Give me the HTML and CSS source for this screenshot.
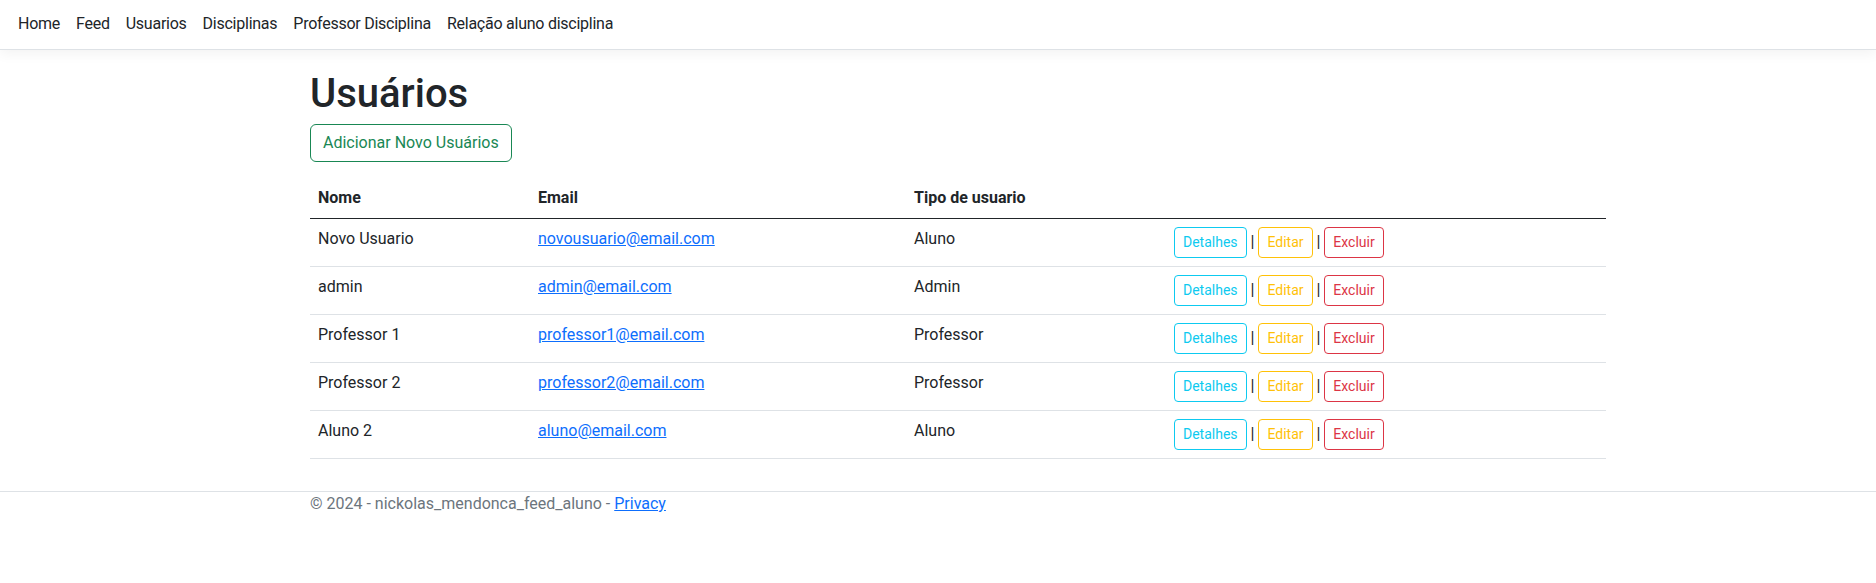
FILE: index.html
```html
<!DOCTYPE html>
<html lang="pt-BR">
<head>
<meta charset="utf-8">
<title>Usuários - nickolas_mendonca_feed_aluno</title>
<link rel="stylesheet" href="styles.css">
</head>
<body>
<header class="topbar">
  <nav class="nav">
    <a class="nav-link" href="#">Home</a>
    <a class="nav-link" href="#">Feed</a>
    <a class="nav-link" href="#">Usuarios</a>
    <a class="nav-link" href="#">Disciplinas</a>
    <a class="nav-link" href="#">Professor Disciplina</a>
    <a class="nav-link" href="#">Relação aluno disciplina</a>
  </nav>
</header>

<main class="page">
  <h1 class="title">Usuários</h1>
  <p class="create"><a class="btn btn-outline-success" href="#">Adicionar Novo Usuários</a></p>

  <table class="users">
    <colgroup>
      <col class="col-name">
      <col class="col-email">
      <col class="col-type">
      <col class="col-actions">
    </colgroup>
    <thead>
      <tr>
        <th>Nome</th>
        <th>Email</th>
        <th>Tipo de usuario</th>
        <th></th>
      </tr>
    </thead>
    <tbody>
      <tr>
        <td>Novo Usuario</td>
        <td><a class="link" href="#">novousuario@email.com</a></td>
        <td>Aluno</td>
        <td><a class="btn-sm info" href="#">Detalhes</a> | <a class="btn-sm warning" href="#">Editar</a> | <a class="btn-sm danger" href="#">Excluir</a></td>
      </tr>
      <tr>
        <td>admin</td>
        <td><a class="link" href="#">admin@email.com</a></td>
        <td>Admin</td>
        <td><a class="btn-sm info" href="#">Detalhes</a> | <a class="btn-sm warning" href="#">Editar</a> | <a class="btn-sm danger" href="#">Excluir</a></td>
      </tr>
      <tr>
        <td>Professor 1</td>
        <td><a class="link" href="#">professor1@email.com</a></td>
        <td>Professor</td>
        <td><a class="btn-sm info" href="#">Detalhes</a> | <a class="btn-sm warning" href="#">Editar</a> | <a class="btn-sm danger" href="#">Excluir</a></td>
      </tr>
      <tr>
        <td>Professor 2</td>
        <td><a class="link" href="#">professor2@email.com</a></td>
        <td>Professor</td>
        <td><a class="btn-sm info" href="#">Detalhes</a> | <a class="btn-sm warning" href="#">Editar</a> | <a class="btn-sm danger" href="#">Excluir</a></td>
      </tr>
      <tr>
        <td>Aluno 2</td>
        <td><a class="link" href="#">aluno@email.com</a></td>
        <td>Aluno</td>
        <td><a class="btn-sm info" href="#">Detalhes</a> | <a class="btn-sm warning" href="#">Editar</a> | <a class="btn-sm danger" href="#">Excluir</a></td>
      </tr>
    </tbody>
  </table>
</main>

<footer class="footer">
  <div class="footer-inner">© 2024 - nickolas_mendonca_feed_aluno - <a class="link" href="#">Privacy</a></div>
</footer>
</body>
</html>
```

FILE: styles.css
```css
* {
  box-sizing: border-box;
}

html, body {
  margin: 0;
  padding: 0;
  background: #fff;
}

body {
  font-family: Roboto, "Liberation Sans", sans-serif;
  font-size: 16px;
  line-height: 24px;
  color: #212529;
}

/* ---------- top navigation ---------- */
.topbar {
  height: 50px;
  border-bottom: 1px solid #dee2e6;
  box-shadow: 0 4px 12px rgba(0, 0, 0, 0.05);
  background: #fff;
}

.nav {
  display: flex;
  align-items: center;
  padding: 12px 0 0 10px;
}

.nav-link {
  display: block;
  padding: 0 8px;
  color: #212529;
  text-decoration: none;
  line-height: 24px;
  letter-spacing: -0.25px;
}

/* ---------- main ---------- */
.page {
  width: 1296px;
  margin-left: 310px;
  padding: 20px 0 16px;
}

.title {
  margin: 0 0 6px;
  font-size: 40px;
  line-height: 48px;
  font-weight: 500;
  color: #212529;
}

.create {
  margin: 0 0 16px;
}

.btn {
  display: inline-block;
  padding: 6px 12px;
  font-size: 16px;
  line-height: 24px;
  border: 1px solid transparent;
  border-radius: 6px;
  text-decoration: none;
}

.btn-outline-success {
  color: #198754;
  border-color: #198754;
}

/* ---------- table ---------- */
.users {
  width: 1296px;
  border-collapse: collapse;
  table-layout: fixed;
  margin-bottom: 16px;
  vertical-align: top;
}

.col-name { width: 220px; }
.col-email { width: 376px; }
.col-type { width: 260px; }
.col-actions { width: 440px; }

.users th,
.users td {
  padding: 8px;
  text-align: left;
  vertical-align: top;
  border-bottom: 1px solid #dee2e6;
  white-space: nowrap;
}

.users th {
  font-weight: 700;
  border-bottom-color: #212529;
}

.link {
  color: #0d6efd;
  text-decoration: underline;
}

.btn-sm {
  display: inline-block;
  padding: 4px 8px;
  font-size: 14px;
  line-height: 21px;
  border: 1px solid currentColor;
  border-radius: 4px;
  text-decoration: none;
}

.btn-sm.info { color: #0dcaf0; }
.btn-sm.warning { color: #ffc107; }
.btn-sm.danger { color: #dc3545; }

/* ---------- footer ---------- */
.footer {
  border-top: 1px solid #dee2e6;
  color: #6c757d;
  line-height: 24px;
}

.footer-inner {
  margin-left: 310px;
}
```
